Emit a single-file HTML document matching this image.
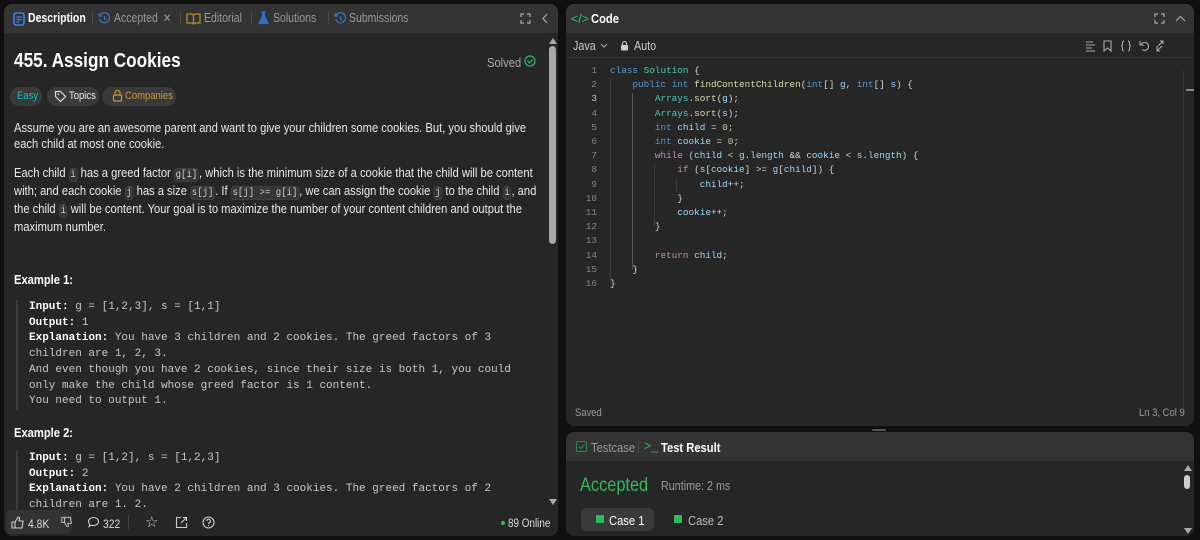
<!DOCTYPE html>
<html><head><meta charset="utf-8"><style>
*{box-sizing:border-box;margin:0;padding:0}
body{width:1200px;height:540px;background:#0f0f0f;font-family:"Liberation Sans",sans-serif;color:#eff1f6;position:relative;overflow:hidden}
.abs{position:absolute}
.panel{position:absolute;background:#262626;border-radius:8px;overflow:hidden}
.hdr{position:absolute;left:0;right:0;top:0;background:#333;}
.tab{position:absolute;top:11px;font-size:12.5px;color:#9a9a9a;white-space:nowrap;transform:scaleX(.84);transform-origin:0 0}
.sep{position:absolute;top:12px;width:1px;height:12px;background:#4a4a4a}
.desc{position:absolute;left:14px;font-size:13px;line-height:16px;color:#eaeaea;width:612px;transform:scaleX(.86);transform-origin:0 0}
code.c{font-family:"Liberation Mono",monospace;font-size:10.5px;background:#353535;border:1px solid #404040;border-radius:4px;padding:0 1px;color:#d0d0d0}
.ex{position:absolute;left:16px;border-left:2px solid #3d3d3d;padding-left:11px;font-family:"Liberation Mono",monospace;font-size:11px;line-height:15.7px;color:#c8c8c8;white-space:pre}
.ex b{color:#fff}
.code{position:absolute;left:566px;top:64px;font-family:"Liberation Mono",monospace;font-size:9.35px;line-height:14.2px;color:#d4d4d4;white-space:pre}
.ln{position:absolute;left:566px;width:31px;text-align:right;top:64px;font-family:"Liberation Mono",monospace;font-size:9.35px;line-height:14.2px;color:#858585;white-space:pre}
.k{color:#569cd6}.t{color:#4ec9b0}.v{color:#9cdcfe}.f{color:#dcdcaa}.p{color:#c586c0}.n{color:#b5cea8}
.pill{position:absolute;top:87px;height:19px;border-radius:10px;background:#3a3a3a}
.pt{position:absolute;top:90px;font-size:11px;white-space:nowrap;transform:scaleX(.86);transform-origin:0 0}
.sm{transform:scaleX(.86);transform-origin:0 0;white-space:nowrap}
</style></head><body>

<!-- LEFT PANEL -->
<div class="panel" style="left:4px;top:4px;width:554px;height:532px">
  <div class="hdr" style="height:29px"></div>
</div>
<svg class="abs" style="left:13px;top:12px" width="12" height="14" viewBox="0 0 12 14"><rect x="1" y="1" width="10" height="12" rx="2" fill="none" stroke="#3b82f6" stroke-width="1.6"/><path d="M3.5 5h5M3.5 7.5h5M3.5 10h3" stroke="#3b82f6" stroke-width="1.3"/></svg>
<div class="tab" style="left:28px;color:#fff;font-weight:bold">Description</div>
<div class="sep" style="left:92px"></div>
<svg class="abs" style="left:98px;top:12px" width="13" height="13" viewBox="0 0 13 13"><path d="M2 3.5A5 5 0 1 1 1.6 7" fill="none" stroke="#3b6fb0" stroke-width="1.4"/><path d="M1 1v3h3" fill="none" stroke="#3b6fb0" stroke-width="1.3"/><path d="M6.5 4v3l2 1" fill="none" stroke="#3b6fb0" stroke-width="1.3"/></svg>
<div class="tab" style="left:114px">Accepted</div>
<div class="tab" style="left:163px;font-size:12px">✕</div>
<div class="sep" style="left:180px"></div>
<svg class="abs" style="left:186px;top:12px" width="15" height="13" viewBox="0 0 15 13"><path d="M1 2h5l1.5 1.5L9 2h5v9H9l-1.5 1L6 11H1z M7.5 3.5v8" fill="none" stroke="#b08a2a" stroke-width="1.3"/></svg>
<div class="tab" style="left:204px">Editorial</div>
<div class="sep" style="left:251px"></div>
<svg class="abs" style="left:258px;top:11px" width="11" height="14" viewBox="0 0 11 14"><path d="M3.5 1h4M4.5 1v4L1 12.5h9L6.5 5V1" fill="#2f6fd0" stroke="#2f6fd0" stroke-width="1.2"/></svg>
<div class="tab" style="left:273px">Solutions</div>
<div class="sep" style="left:328px"></div>
<svg class="abs" style="left:334px;top:12px" width="13" height="13" viewBox="0 0 13 13"><path d="M2 3.5A5 5 0 1 1 1.6 7" fill="none" stroke="#3b6fb0" stroke-width="1.4"/><path d="M1 1v3h3" fill="none" stroke="#3b6fb0" stroke-width="1.3"/><path d="M6.5 4v3l2 1" fill="none" stroke="#3b6fb0" stroke-width="1.3"/></svg>
<div class="tab" style="left:349px">Submissions</div>
<svg class="abs" style="left:520px;top:13px" width="11" height="11" viewBox="0 0 11 11"><path d="M1 4V1h3M7 1h3v3M10 7v3H7M4 10H1V7" fill="none" stroke="#aaa" stroke-width="1.2"/></svg>
<svg class="abs" style="left:541px;top:13px" width="8" height="11" viewBox="0 0 8 11"><path d="M6 1L2 5.5 6 10" fill="none" stroke="#aaa" stroke-width="1.2"/></svg>

<!-- scrollbar -->
<svg class="abs" style="left:548px;top:37px" width="10" height="8"><path d="M1 7L5 1 9 7z" fill="#aaa"/></svg>
<div class="abs" style="left:549px;top:46px;width:7px;height:198px;background:#a8a8a8;border-radius:4px"></div>
<svg class="abs" style="left:548px;top:498px" width="10" height="8"><path d="M1 1L5 7 9 1z" fill="#aaa"/></svg>

<div class="abs sm" style="left:14px;top:50px;font-size:20px;font-weight:bold;color:#fff">455. Assign Cookies</div>
<div class="abs sm" style="left:487px;top:55px;font-size:13px;color:#aaa">Solved</div>
<svg class="abs" style="left:524px;top:55px" width="12" height="12" viewBox="0 0 12 12"><circle cx="6" cy="6" r="5" fill="none" stroke="#2cbb5d" stroke-width="1.2"/><path d="M3.5 6l2 2 3-3.5" fill="none" stroke="#2cbb5d" stroke-width="1.2"/></svg>

<div class="pill" style="left:10px;width:32px"></div>
<div class="pt" style="left:17px;color:#1cbaba">Easy</div>
<div class="pill" style="left:47px;width:52px"></div>
<svg class="abs" style="left:54px;top:90px" width="13" height="13" viewBox="0 0 13 13"><path d="M1.5 1.5h5l5 5-5 5-5-5z" fill="none" stroke="#ddd" stroke-width="1.2"/><circle cx="4.3" cy="4.3" r=".9" fill="#ddd"/></svg>
<div class="pt" style="left:69px;color:#eee">Topics</div>
<div class="pill" style="left:102px;width:74px"></div>
<svg class="abs" style="left:112px;top:89px" width="11" height="13" viewBox="0 0 11 13"><path d="M3 6V4a2.5 2.5 0 0 1 5 0v2" fill="none" stroke="#c79a3a" stroke-width="1.2"/><rect x="1.5" y="6" width="8" height="6" rx="1" fill="none" stroke="#c79a3a" stroke-width="1.2"/></svg>
<div class="pt" style="left:125px;color:#c79a3a">Companies</div>

<div class="desc" style="top:120px">Assume you are an awesome parent and want to give your children some cookies. But, you should give each child at most one cookie.</div>
<div class="desc" style="top:165px">Each child <code class="c">i</code> has a greed factor <code class="c">g[i]</code>, which is the minimum size of a cookie that the child will be content with; and each cookie <code class="c">j</code> has a size <code class="c">s[j]</code>. If <code class="c">s[j] &gt;= g[i]</code>, we can assign the cookie <code class="c">j</code> to the child <code class="c">i</code>, and the child <code class="c">i</code> will be content. Your goal is to maximize the number of your content children and output the maximum number.</div>

<div class="abs sm" style="left:14px;top:272px;font-size:13px;font-weight:bold;color:#fff">Example 1:</div>
<div class="ex" style="top:300px"><b>Input:</b> g = [1,2,3], s = [1,1]
<b>Output:</b> 1
<b>Explanation:</b> You have 3 children and 2 cookies. The greed factors of 3
children are 1, 2, 3. 
And even though you have 2 cookies, since their size is both 1, you could
only make the child whose greed factor is 1 content.
You need to output 1.</div>

<div class="abs sm" style="left:14px;top:425px;font-size:13px;font-weight:bold;color:#fff">Example 2:</div>
<div class="ex" style="top:451px;height:59px;overflow:hidden"><b>Input:</b> g = [1,2], s = [1,2,3]
<b>Output:</b> 2
<b>Explanation:</b> You have 2 children and 3 cookies. The greed factors of 2
children are 1. 2.</div>

<!-- footer -->
<div class="abs" style="left:4px;top:510px;width:554px;height:26px;background:#262626;border-radius:0 0 8px 8px"></div>
<div class="abs" style="left:6px;top:510px;width:66px;height:24px;background:#333;border-radius:6px"></div>
<div class="abs sm" style="left:28px;top:517px;font-size:12px;color:#ddd">4.8K</div>
<svg class="abs" style="left:11px;top:516px" width="14" height="13" viewBox="0 0 14 13"><path d="M1 6h3v6H1zM4 6l3-5c1.5 0 1.7 1 1.5 2L8 5h4l-1 7H4" fill="none" stroke="#ccc" stroke-width="1.1"/></svg>
<svg class="abs" style="left:61px;top:516px" width="12" height="12" viewBox="0 0 14 13"><path d="M1 1h3v6H1zM4 7l3 5c1.5 0 1.7-1 1.5-2L8 8h4l-1-7H4" fill="none" stroke="#ccc" stroke-width="1.1"/></svg>
<svg class="abs" style="left:87px;top:516px" width="13" height="12" viewBox="0 0 13 12"><path d="M6.5 1.5c3 0 5 1.8 5 4s-2 4-5 4c-.8 0-1.5-.1-2.1-.3L2 10.5l.6-2.2C1.9 7.5 1.5 6.5 1.5 5.5c0-2.2 2-4 5-4z" fill="none" stroke="#ccc" stroke-width="1.1"/></svg>
<div class="abs sm" style="left:103px;top:517px;font-size:12px;color:#ddd">322</div>
<div class="abs" style="left:128px;top:515px;width:1px;height:14px;background:#444"></div>
<div class="abs" style="left:145px;top:513px;font-size:15px;color:#ccc">☆</div>
<svg class="abs" style="left:175px;top:516px" width="13" height="13" viewBox="0 0 13 13"><path d="M6 1.5H1.5v10h10V7M8 1.5h3.5V5M11.5 1.5L6 7" fill="none" stroke="#ccc" stroke-width="1.1"/></svg>
<svg class="abs" style="left:202px;top:516px" width="13" height="13" viewBox="0 0 13 13"><circle cx="6.5" cy="6.5" r="5.5" fill="none" stroke="#ccc" stroke-width="1.1"/><path d="M4.8 5a1.8 1.8 0 1 1 2.3 1.7c-.5.2-.6.5-.6 1.2" fill="none" stroke="#ccc" stroke-width="1.1"/><circle cx="6.5" cy="9.6" r=".6" fill="#ccc"/></svg>
<div class="abs" style="left:501px;top:521px;width:4px;height:4px;border-radius:2px;background:#2cbb5d"></div>
<div class="abs sm" style="left:508px;top:518px;font-size:11.5px;color:#ddd">89 Online</div>

<!-- RIGHT CODE PANEL -->
<div class="panel" style="left:566px;top:4px;width:628px;height:422px">
  <div class="hdr" style="height:29px"></div>
  <div class="abs" style="left:0;right:0;top:53px;height:1px;background:#333"></div>
</div>
<div class="abs" style="left:571px;top:12px;font-size:12.5px;color:#2cbb5d">&lt;/&gt;</div>
<div class="abs sm" style="left:591px;top:11px;font-size:13px;font-weight:bold;color:#fff">Code</div>
<svg class="abs" style="left:1154px;top:13px" width="11" height="11" viewBox="0 0 11 11"><path d="M1 4V1h3M7 1h3v3M10 7v3H7M4 10H1V7" fill="none" stroke="#aaa" stroke-width="1.2"/></svg>
<svg class="abs" style="left:1175px;top:15px" width="11" height="7" viewBox="0 0 11 7"><path d="M1 6L5.5 1.5 10 6" fill="none" stroke="#aaa" stroke-width="1.2"/></svg>
<div class="abs sm" style="left:573px;top:39px;font-size:12.5px;color:#ccc">Java</div>
<svg class="abs" style="left:600px;top:43px" width="8" height="5"><path d="M1 1l3 3 3-3" fill="none" stroke="#aaa" stroke-width="1"/></svg>
<svg class="abs" style="left:620px;top:40px" width="9" height="11" viewBox="0 0 9 11"><path d="M2.5 5V3.5a2 2 0 0 1 4 0V5" fill="none" stroke="#ccc" stroke-width="1.1"/><rect x="1" y="5" width="7" height="5.5" rx="1" fill="#ccc"/></svg>
<div class="abs sm" style="left:634px;top:39px;font-size:12.5px;color:#ccc">Auto</div>
<svg class="abs" style="left:1083px;top:40px" width="110" height="12" viewBox="0 0 110 12">
<g fill="none" stroke="#aaa" stroke-width="1.1"><path d="M3 2h7M3 5h9M3 8h6M3 11h9"/><path d="M21 1h7v10l-3.5-3-3.5 3z"/><path d="M41 1c-2 0-1.5 2-1.5 3.5S38 6 38 6s1.5 0 1.5 1.5S39 11 41 11M45 1c2 0 1.5 2 1.5 3.5S48 6 48 6s-1.5 0-1.5 1.5.5 3.5-1.5 3.5"/><path d="M58 4.5a4 4 0 1 1 1 5M57 1v4h4"/><path d="M75 6l5-5M77 1h3v3M74 6v5h0M79 6l-5 5M74 8v3h3"/></g></svg>

<div class="abs" style="left:1183px;top:70px;width:1px;height:338px;background:#333"></div>
<div class="abs" style="left:1186px;top:89px;width:8px;height:2px;background:#888"></div>

<div class="ln">1
2
<span style="color:#ccc">3</span>
4
5
6
7
8
9
10
11
12
13
14
15
16</div>
<div class="abs" style="left:610px;top:79px;width:1px;height:204px;background:#3a3a3a"></div>
<div class="abs" style="left:632px;top:93px;width:1px;height:176px;background:#555"></div>
<div class="abs" style="left:654px;top:164px;width:1px;height:62px;background:#3a3a3a"></div>
<div class="abs" style="left:676px;top:178px;width:1px;height:14px;background:#3a3a3a"></div>
<div class="code" style="left:610px"><span class="k">class</span> <span class="t">Solution</span> {
    <span class="k">public</span> <span class="k">int</span> <span class="f">findContentChildren</span>(<span class="k">int</span>[] <span class="v">g</span>, <span class="k">int</span>[] <span class="v">s</span>) {
        <span class="t">Arrays</span>.<span class="f">sort</span>(<span class="v">g</span>);
        <span class="t">Arrays</span>.<span class="f">sort</span>(<span class="v">s</span>);
        <span class="k">int</span> <span class="v">child</span> = <span class="n">0</span>;
        <span class="k">int</span> <span class="v">cookie</span> = <span class="n">0</span>;
        <span class="p">while</span> (<span class="v">child</span> &lt; <span class="v">g</span>.<span class="v">length</span> &amp;&amp; <span class="v">cookie</span> &lt; <span class="v">s</span>.<span class="v">length</span>) {
            <span class="p">if</span> (<span class="v">s</span>[<span class="v">cookie</span>] &gt;= <span class="v">g</span>[<span class="v">child</span>]) {
                <span class="v">child</span>++;
            }
            <span class="v">cookie</span>++;
        }

        <span class="p">return</span> <span class="v">child</span>;
    }
}</div>

<div class="abs sm" style="left:575px;top:407px;font-size:11px;color:#999">Saved</div>
<div class="abs sm" style="left:1139px;top:407px;font-size:11px;color:#999">Ln 3, Col 9</div>
<div class="abs" style="left:872px;top:429px;width:14px;height:2px;background:#555;border-radius:1px"></div>

<!-- TEST RESULT PANEL -->
<div class="panel" style="left:566px;top:432px;width:628px;height:104px">
  <div class="hdr" style="height:29px"></div>
</div>
<svg class="abs" style="left:576px;top:441px" width="11" height="11"><rect x=".5" y=".5" width="10" height="10" rx="1.5" fill="none" stroke="#2a8a4a"/><path d="M3 5.5l2 2 3.5-4" fill="none" stroke="#2a8a4a"/></svg>
<div class="abs sm" style="left:591px;top:440px;font-size:13px;color:#999">Testcase</div>
<div class="abs" style="left:638px;top:441px;width:1px;height:12px;background:#4a4a4a"></div>
<div class="abs" style="left:644px;top:439px;font-size:12.5px;color:#2cbb5d">&gt;_</div>
<div class="abs sm" style="left:661px;top:440px;font-size:13px;font-weight:bold;color:#fff">Test Result</div>
<div class="abs sm" style="left:580px;top:475px;font-size:19px;color:#2cbb5d">Accepted</div>
<div class="abs sm" style="left:661px;top:479px;font-size:12.5px;color:#999">Runtime: 2 ms</div>
<div class="abs" style="left:581px;top:508px;width:73px;height:23px;background:#3a3a3a;border-radius:6px"></div>
<div class="abs" style="left:596px;top:515px;width:8px;height:8px;background:#2cbb5d;border-radius:1px"></div>
<div class="abs sm" style="left:609px;top:513px;font-size:13px;color:#fff">Case 1</div>
<div class="abs" style="left:674px;top:515px;width:8px;height:8px;background:#2cbb5d;border-radius:1px"></div>
<div class="abs sm" style="left:688px;top:513px;font-size:13px;color:#bbb">Case 2</div>
<svg class="abs" style="left:1183px;top:464px" width="10" height="8"><path d="M1 7L5 1 9 7z" fill="#aaa"/></svg>
<div class="abs" style="left:1184px;top:475px;width:6px;height:14px;background:#ccc;border-radius:3px"></div>
<svg class="abs" style="left:1183px;top:527px" width="10" height="8"><path d="M1 1L5 7 9 1z" fill="#aaa"/></svg>
</body></html>
